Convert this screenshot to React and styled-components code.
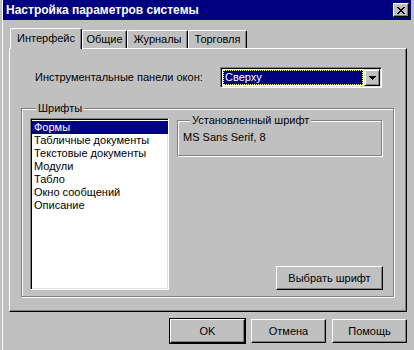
import React from 'react';
import styled, { createGlobalStyle } from 'styled-components';

const Global = createGlobalStyle`
  html, body { margin: 0; padding: 0; background: #c0c0c0; }
  body {
    font-family: "Liberation Sans", Arial, sans-serif;
    font-size: 11px;
    color: #000;
  }
  * { box-sizing: border-box; }
`;

const raised = `
  border-top: 1px solid #fff;
  border-left: 1px solid #fff;
  border-right: 1px solid #000;
  border-bottom: 1px solid #000;
  box-shadow: inset -1px -1px 0 #808080;
`;

const sunken = `
  border-top: 1px solid #808080;
  border-left: 1px solid #808080;
  border-right: 1px solid #fff;
  border-bottom: 1px solid #fff;
  box-shadow: inset 1px 1px 0 #000, inset -1px -1px 0 #dfdfdf;
`;

const Window = styled.div`
  width: 414px;
  height: 350px;
  background: #c0c0c0;
  padding: 0 3px;
  box-shadow: inset 2px 0 0 #c0c0c0, inset 3px 0 0 #fff;
  display: flex;
  flex-direction: column;
  overflow: hidden;
`;

const TitleBar = styled.div`
  height: 20px;
  background: #000080;
  color: #fff;
  display: flex;
  align-items: center;
  justify-content: space-between;
  padding: 0 2px 0 3px;
  font-weight: bold;
  font-size: 12px;
`;

const TitleText = styled.span`
  line-height: 14px;
`;

const CloseButton = styled.div`
  width: 16px;
  height: 14px;
  background: #c0c0c0;
  ${raised}
  display: flex;
  align-items: center;
  justify-content: center;
`;

const Body = styled.div`
  display: flex;
  flex-direction: column;
  padding: 8px 4px 0 6px;
`;

const TabRow = styled.div`
  display: flex;
  align-items: flex-end;
  padding-left: 1px;
  height: 20px;
  position: relative;
  z-index: 1;
`;

const Tab = styled.div`
  height: ${(p) => (p.$active ? 21 : 18)}px;
  width: ${(p) => p.$w}px;
  margin-bottom: ${(p) => (p.$active ? -1 : 0)}px;
  background: #c0c0c0;
  border-top: 1px solid #fff;
  border-left: 1px solid #fff;
  border-right: 1px solid #000;
  border-radius: 2px 2px 0 0;
  box-shadow: inset -1px 0 0 #808080;
  display: flex;
  align-items: ${(p) => (p.$active ? 'flex-start' : 'center')};
  padding-top: ${(p) => (p.$active ? 3 : 0)}px;
  justify-content: center;
  line-height: 13px;
`;

const TabPanel = styled.div`
  height: 264px;
  ${raised}
  display: flex;
  flex-direction: column;
  padding-top: 18px;
`;

const ComboRow = styled.div`
  display: flex;
  align-items: center;
  justify-content: space-between;
  padding: 0 24px 0 25px;
`;

const Label = styled.span`
  line-height: 13px;
`;

const Combo = styled.div`
  width: 162px;
  height: 21px;
  background: #fff;
  ${sunken}
  display: flex;
  padding: 1px;
`;

const ComboValue = styled.div`
  flex: 1;
  margin: 1px;
  background: #000080;
  color: #fff;
  outline: 1px dotted #ffff80;
  outline-offset: -1px;
  padding-left: 2px;
  display: flex;
  align-items: center;
  line-height: 13px;
`;

const ComboButton = styled.div`
  width: 16px;
  height: 17px;
  background: #c0c0c0;
  border-top: 1px solid #dfdfdf;
  border-left: 1px solid #dfdfdf;
  border-right: 1px solid #000;
  border-bottom: 1px solid #000;
  box-shadow: inset 1px 1px 0 #fff, inset -1px -1px 0 #808080;
  display: flex;
  align-items: center;
  justify-content: center;
`;

const Group = styled.fieldset`
  margin: ${(p) => p.$m};
  padding: ${(p) => p.$p};
  border: 1px solid #808080;
  box-shadow: inset 1px 1px 0 #fff, 1px 1px 0 #fff;
  min-width: 0;
`;

const Legend = styled.legend`
  padding: 0 2px;
  margin-left: ${(p) => p.$ml}px;
  line-height: 13px;
  background: #c0c0c0;
`;

const GroupContent = styled.div`
  display: flex;
  gap: 8px;
`;

const ListBox = styled.div`
  width: 139px;
  height: 172px;
  margin-top: 3px;
  background: #fff;
  ${sunken}
  padding: 2px 0 0 1px;
  display: flex;
  flex-direction: column;
`;

const ListItem = styled.div`
  height: 13px;
  line-height: 13px;
  padding-left: 2px;
  background: ${(p) => (p.$selected ? '#000080' : 'transparent')};
  color: ${(p) => (p.$selected ? '#fff' : '#000')};
  white-space: nowrap;
`;

const RightColumn = styled.div`
  width: 206px;
  display: flex;
  flex-direction: column;
  justify-content: space-between;
  align-items: stretch;
`;

const FontValue = styled.div`
  line-height: 13px;
`;

const Button = styled.button`
  font-family: inherit;
  font-size: 11px;
  font-weight: normal;
  color: #000;
  width: ${(p) => p.$w}px;
  height: ${(p) => p.$h}px;
  background: #c0c0c0;
  padding: 0;
  ${raised}
  outline: ${(p) => (p.$default ? '1px solid #000' : 'none')};
  outline-offset: 0;
  align-self: ${(p) => p.$self || 'auto'};
  line-height: 13px;
`;

const ButtonRow = styled.div`
  display: flex;
  justify-content: flex-end;
  gap: ${(p) => p.$gap}px;
  margin-top: 7px;
`;

const CloseIcon = () => (
  <svg width="8" height="7" viewBox="0 0 8 7" shapeRendering="crispEdges">
    <g fill="#000">
      <rect x="0" y="0" width="2" height="1" />
      <rect x="6" y="0" width="2" height="1" />
      <rect x="1" y="1" width="2" height="1" />
      <rect x="5" y="1" width="2" height="1" />
      <rect x="2" y="2" width="4" height="1" />
      <rect x="3" y="3" width="2" height="1" />
      <rect x="2" y="4" width="4" height="1" />
      <rect x="1" y="5" width="2" height="1" />
      <rect x="5" y="5" width="2" height="1" />
      <rect x="0" y="6" width="2" height="1" />
      <rect x="6" y="6" width="2" height="1" />
    </g>
  </svg>
);

const ArrowIcon = () => (
  <svg width="7" height="4" viewBox="0 0 7 4" shapeRendering="crispEdges">
    <g fill="#000">
      <rect x="0" y="0" width="7" height="1" />
      <rect x="1" y="1" width="5" height="1" />
      <rect x="2" y="2" width="3" height="1" />
      <rect x="3" y="3" width="1" height="1" />
    </g>
  </svg>
);

const tabs = [
  { label: 'Интерфейс', w: 72, active: true },
  { label: 'Общие', w: 45 },
  { label: 'Журналы', w: 61 },
  { label: 'Торговля', w: 59 },
];

const items = [
  'Формы',
  'Табличные документы',
  'Текстовые документы',
  'Модули',
  'Табло',
  'Окно сообщений',
  'Описание',
];

export default function App() {
  return (
    <>
      <Global />
      <Window>
        <TitleBar>
          <TitleText>Настройка параметров системы</TitleText>
          <CloseButton>
            <CloseIcon />
          </CloseButton>
        </TitleBar>
        <Body>
          <TabRow>
            {tabs.map((t) => (
              <Tab key={t.label} $w={t.w} $active={t.active}>
                {t.label}
              </Tab>
            ))}
          </TabRow>
          <TabPanel>
            <ComboRow>
              <Label>Инструментальные панели окон:</Label>
              <Combo>
                <ComboValue>Сверху</ComboValue>
                <ComboButton>
                  <ArrowIcon />
                </ComboButton>
              </Combo>
            </ComboRow>
            <Group $m="14px 12px 0 11px" $p="0 9px 6px 8px">
              <Legend $ml={6}>Шрифты</Legend>
              <GroupContent>
                <ListBox>
                  {items.map((it, i) => (
                    <ListItem key={it} $selected={i === 0}>
                      {it}
                    </ListItem>
                  ))}
                </ListBox>
                <RightColumn>
                  <Group $m="-1px 1px 0 0" $p="4px 5px 11px 5px">
                    <Legend $ml={7}>Установленный шрифт</Legend>
                    <FontValue>MS Sans Serif, 8</FontValue>
                  </Group>
                  <Button $w={107} $h={24} $self="flex-end">
                    Выбрать шрифт
                  </Button>
                </RightColumn>
              </GroupContent>
            </Group>
          </TabPanel>
          <ButtonRow $gap={6}>
            <Button $w={75} $h={24} $default>
              OK
            </Button>
            <Button $w={75} $h={24}>
              Отмена
            </Button>
            <Button $w={75} $h={24}>
              Помощь
            </Button>
          </ButtonRow>
        </Body>
      </Window>
    </>
  );
}
